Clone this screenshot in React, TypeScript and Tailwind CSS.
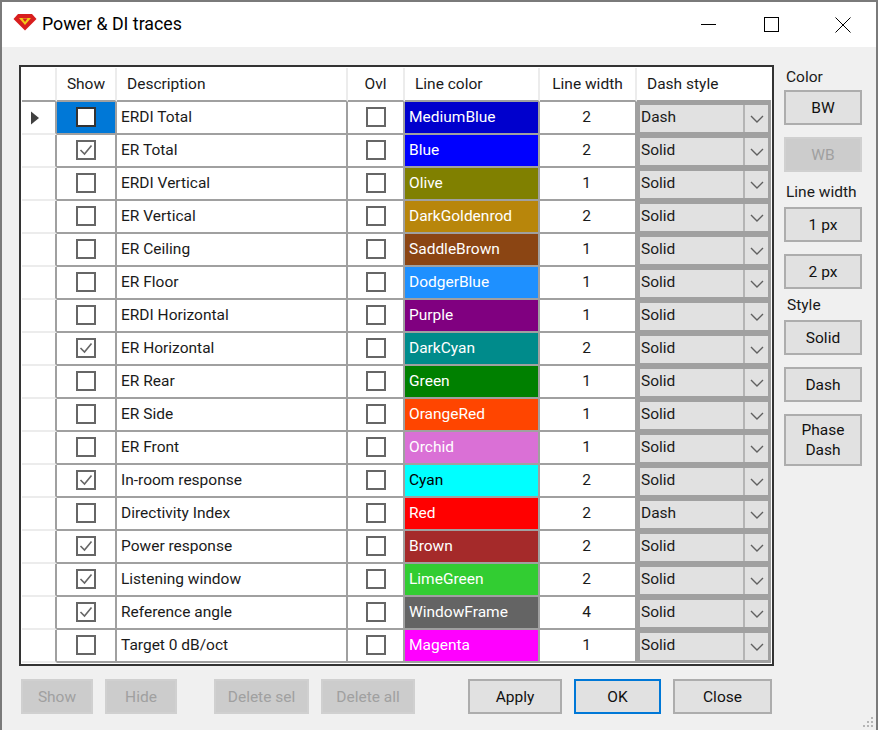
const rows: [string, boolean, string, string, string, string, string][] = [
  ["ERDI Total", false, "MediumBlue", "bg-[#0000cd]", "text-white", "2", "Dash"],
  ["ER Total", true, "Blue", "bg-[#0000ff]", "text-white", "2", "Solid"],
  ["ERDI Vertical", false, "Olive", "bg-[#808000]", "text-white", "1", "Solid"],
  ["ER Vertical", false, "DarkGoldenrod", "bg-[#b8860b]", "text-white", "2", "Solid"],
  ["ER Ceiling", false, "SaddleBrown", "bg-[#8b4513]", "text-white", "1", "Solid"],
  ["ER Floor", false, "DodgerBlue", "bg-[#1e90ff]", "text-white", "1", "Solid"],
  ["ERDI Horizontal", false, "Purple", "bg-[#800080]", "text-white", "1", "Solid"],
  ["ER Horizontal", true, "DarkCyan", "bg-[#008b8b]", "text-white", "2", "Solid"],
  ["ER Rear", false, "Green", "bg-[#008000]", "text-white", "1", "Solid"],
  ["ER Side", false, "OrangeRed", "bg-[#ff4500]", "text-white", "1", "Solid"],
  ["ER Front", false, "Orchid", "bg-[#da70d6]", "text-white", "1", "Solid"],
  ["In-room response", true, "Cyan", "bg-[#00ffff]", "text-black", "2", "Solid"],
  ["Directivity Index", false, "Red", "bg-[#ff0000]", "text-white", "2", "Dash"],
  ["Power response", true, "Brown", "bg-[#a52a2a]", "text-white", "2", "Solid"],
  ["Listening window", true, "LimeGreen", "bg-[#32cd32]", "text-white", "2", "Solid"],
  ["Reference angle", true, "WindowFrame", "bg-[#646464]", "text-white", "4", "Solid"],
  ["Target 0 dB/oct", false, "Magenta", "bg-[#ff00ff]", "text-white", "1", "Solid"],
];

const cols = "grid grid-cols-[35px_60px_231px_57px_135px_97px_134px]";

function Check({ checked, dark }: { checked: boolean; dark?: boolean }) {
  return (
    <span className={`w-[20px] h-[20px] mb-[1px] border-2 bg-white flex items-center justify-center ${dark ? "border-[#333333]" : "border-[#666666]"}`}>
      {checked && (
        <svg width="16" height="16" viewBox="0 0 16 16" fill="none">
          <path d="M2.5 8 L6.5 12 L13.5 3.5" stroke="#666666" strokeWidth="1.6" />
        </svg>
      )}
    </span>
  );
}

function Btn({ children, w, h = "h-[35px]", disabled, focus, className = "" }: { children: React.ReactNode; w: string; h?: string; disabled?: boolean; focus?: boolean; className?: string }) {
  const look = disabled
    ? "bg-[#cccccc] border-[#d0d0d0] text-[#a0a0a0]"
    : focus
    ? "bg-[#e1e1e1] border-[#0078d7] text-[#111111]"
    : "bg-[#e1e1e1] border-[#adadad] text-[#111111]";
  return (
    <div className={`${w} ${h} border-2 ${look} flex items-center justify-center text-center leading-[20px] shrink-0 ${className}`}>
      {children}
    </div>
  );
}

export default function App() {
  return (
    <div className="w-[878px] h-[730px] bg-[#f0f0f0] border-x-2 border-t-2 border-[#7a7a7a] flex flex-col overflow-hidden text-[15.5px] text-[#1a1a1a] relative" style={{ fontFamily: "Roboto, sans-serif" }}>
      <div className="h-[45px] bg-white flex items-center shrink-0 pl-[11px]">
        <svg width="24" height="18" viewBox="0 0 24 18" className="mb-[5px]">
          <path d="M5 1 H19 L23.5 6 L12 17.5 L0.5 6 Z" fill="#d81e1e" />
          <path d="M6 5 L18 5 L12 12 Z" fill="#f2c919" />
          <path d="M9.5 5.5 H14.5 L12 9 Z" fill="#d81e1e" />
        </svg>
        <span className="ml-[5px] text-[17.8px] text-black mb-[1px]">Power &amp; DI traces</span>
        <div className="ml-auto flex items-center">
          <span className="w-[15px] h-px bg-black mr-[48px]" />
          <span className="w-[15px] h-[15px] border border-black mr-[56px]" />
          <svg width="16" height="16" viewBox="0 0 16 16" className="mr-[25px]" fill="none">
            <path d="M0.5 0.5 L15.5 15.5 M15.5 0.5 L0.5 15.5" stroke="#000" strokeWidth="1" />
          </svg>
        </div>
      </div>

      <div className="flex pl-[17px] pt-[18px]">
        <div className="w-[755px] h-[601px] border-2 border-[#333333] bg-white p-[1px] shrink-0">
          <div className={`${cols} h-[34px]`}>
            {["", "Show", "Description", "Ovl", "Line color", "Line width", "Dash style"].map((h, i) => (
              <div key={i} className={`flex items-center pt-[1px] border-b-2 border-[#a0a0a0] border-r-2 border-r-[#ececec] last:border-r-0 ${i === 2 || i === 4 || i === 6 ? "pl-[10px]" : "justify-center"}`}>
                {h}
              </div>
            ))}
          </div>
          {rows.map(([desc, show, color, bg, fg, width, dash], i) => (
            <div key={desc} className={`${cols} h-[33px]`}>
              <div className="flex items-center justify-center border-r-2 border-b-2 border-r-[#a0a0a0] border-b-[#ececec]">
                {i === 0 && (
                  <svg width="10" height="14" viewBox="0 0 10 14" className="mr-[8px]">
                    <path d="M1 0.5 L9 7 L1 13.5 Z" fill="#404040" />
                  </svg>
                )}
              </div>
              <div className={`flex items-center justify-center border-r-2 border-b-2 border-[#a0a0a0] ${i === 0 ? "bg-[#0078d7]" : ""}`}>
                <Check checked={show} dark={i === 0} />
              </div>
              <div className="flex items-center pl-[4px] border-r-2 border-b-2 border-[#a0a0a0]">{desc}</div>
              <div className="flex items-center justify-center border-r-2 border-b-2 border-[#a0a0a0]">
                <Check checked={false} />
              </div>
              <div className={`flex items-center pl-[4px] border-r-2 border-b-2 border-[#a0a0a0] ${bg} ${fg}`}>{color}</div>
              <div className="flex items-center justify-center pr-[2px] border-r-2 border-b-2 border-[#a0a0a0]">{width}</div>
              <div className="flex bg-[#e1e1e1] border-[3px] border-[#a0a0a0]">
                <div className="flex-1 flex items-center pl-[1px] pb-[1px] border-r-2 border-[#b4b4b4]">{dash}</div>
                <div className="w-[23px] flex items-center justify-center">
                  <svg width="14" height="8" viewBox="0 0 14 8" fill="none">
                    <path d="M1 1 L7 7 L13 1" stroke="#606060" strokeWidth="1.4" />
                  </svg>
                </div>
              </div>
            </div>
          ))}
        </div>

        <div className="ml-[10px] flex flex-col w-[78px]">
          <div className="h-[25px] pl-[2px] pt-[1px]">Color</div>
          <Btn w="w-[78px]">BW</Btn>
          <Btn w="w-[78px]" disabled className="mt-[12px]">WB</Btn>
          <div className="h-[35px] pl-[2px] pb-[3px] flex items-end">Line width</div>
          <Btn w="w-[78px]">1 px</Btn>
          <Btn w="w-[78px]" className="mt-[12px]">2 px</Btn>
          <div className="h-[31px] pl-[3px] pb-[3px] flex items-end">Style</div>
          <Btn w="w-[78px]">Solid</Btn>
          <Btn w="w-[78px]" className="mt-[12px]">Dash</Btn>
          <Btn w="w-[78px]" h="h-[52px]" className="mt-[12px]">Phase<br />Dash</Btn>
        </div>
      </div>

      <div className="flex pl-[19px] pt-[13px]">
        <Btn w="w-[72px]" disabled>Show</Btn>
        <Btn w="w-[72px]" disabled className="ml-[12px]">Hide</Btn>
        <Btn w="w-[95px]" disabled className="ml-[37px]">Delete sel</Btn>
        <Btn w="w-[94px]" disabled className="ml-[12px]">Delete all</Btn>
        <Btn w="w-[94px]" className="ml-[53px]">Apply</Btn>
        <Btn w="w-[87px]" focus className="ml-[12px]">OK</Btn>
        <Btn w="w-[99px]" className="ml-[12px]">Close</Btn>
      </div>

      <svg width="14" height="14" viewBox="0 0 14 14" className="absolute right-[1px] bottom-[1px]" fill="#b5b5b5">
        <rect x="10" y="2" width="2" height="2" />
        <rect x="6" y="6" width="2" height="2" />
        <rect x="10" y="6" width="2" height="2" />
        <rect x="2" y="10" width="2" height="2" />
        <rect x="6" y="10" width="2" height="2" />
        <rect x="10" y="10" width="2" height="2" />
      </svg>
    </div>
  );
}
